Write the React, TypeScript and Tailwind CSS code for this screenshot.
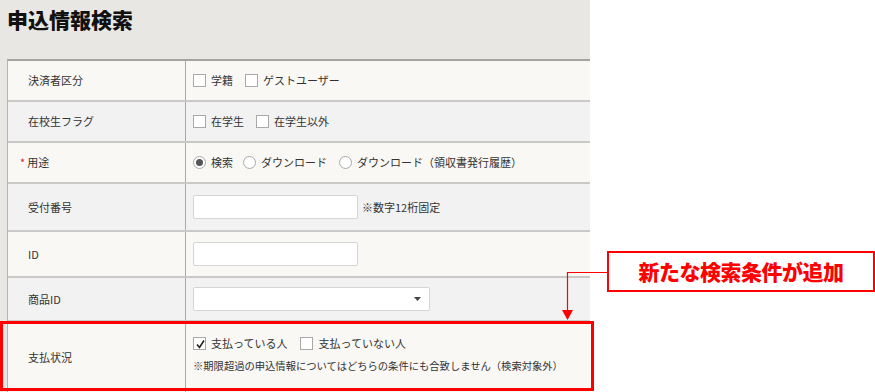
import React from "react";

const jp = { fontFamily: '"Noto Sans CJK JP", "Noto Sans", sans-serif' };

const Box = ({ checked }: { checked?: boolean }) => (
    <span className="relative inline-block w-[13px] h-[13px] border border-[#a9a9a9] bg-white shrink-0">
        {checked && (
            <svg viewBox="0 0 13 13" className="absolute inset-0 w-[13px] h-[13px]">
                <path d="M3 6.5 L5.5 9.5 L10 2.5" fill="none" stroke="#222" strokeWidth="1.6" />
            </svg>
        )}
    </span>
);

const Radio = ({ checked }: { checked?: boolean }) => (
    <span className="inline-flex items-center justify-center w-[13px] h-[13px] rounded-full border border-[#a9a9a9] bg-white shrink-0">
        {checked && <span className="w-[7px] h-[7px] rounded-full bg-[#555]" />}
    </span>
);

const Row = ({ label, alt, h, req, children }: { label: string; alt?: boolean; h: string; req?: boolean; children: React.ReactNode }) => (
    <div className={`flex border-b-2 border-[#c9c9c7] ${alt ? "bg-[#f2f2f2]" : "bg-[#f9f8f5]"} ${h}`}>
        <div className="w-[178px] shrink-0 flex items-center pl-[20px] border-r border-[#a9a9a9]">
            {req && <span className="text-[#e0202a] mr-[2px] -ml-[8px]">*</span>}
            {label}
        </div>
        <div className="flex-1 flex items-center pl-[7px]">{children}</div>
    </div>
);

export default function App() {
    return (
        <div className="relative w-[875px] h-[392px] bg-white overflow-hidden text-[11px] text-[#333]" style={jp}>
            <div className="w-[590px] h-full bg-[#e8e7e3] pl-[7px]">
                <h1 className="h-[59px] pt-[4px] text-[21px] font-black text-[#111] leading-[30px]">申込情報検索</h1>
                <div className="border-t-2 border-[#a3a3a1] border-l border-l-[#b5b5b5]">
                    <Row label="決済者区分" h="h-[41px]">
                        <Box /><span className="ml-[5px] mr-[12px]">学籍</span>
                        <Box /><span className="ml-[5px]">ゲストユーザー</span>
                    </Row>
                    <Row label="在校生フラグ" alt h="h-[41px]">
                        <Box /><span className="ml-[5px] mr-[12px]">在学生</span>
                        <Box /><span className="ml-[5px]">在学生以外</span>
                    </Row>
                    <Row label="用途" req h="h-[41px]">
                        <Radio checked /><span className="ml-[5px] mr-[10px]">検索</span>
                        <Radio /><span className="ml-[5px] mr-[12px]">ダウンロード</span>
                        <Radio /><span className="ml-[5px]">ダウンロード（領収書発行履歴）</span>
                    </Row>
                    <Row label="受付番号" alt h="h-[48px]">
                        <span className="w-[165px] h-[24px] border border-[#d5d5d5] bg-white rounded-[2px]" />
                        <span className="ml-[4px]">※数字12桁固定</span>
                    </Row>
                    <Row label="ID" h="h-[46px]">
                        <span className="w-[165px] h-[24px] border border-[#d5d5d5] bg-white rounded-[2px]" />
                    </Row>
                    <Row label="商品ID" alt h="h-[44px]">
                        <span className="w-[237px] h-[24px] border border-[#d5d5d5] bg-white rounded-[2px] flex items-center justify-end pr-[8px]">
                            <svg viewBox="0 0 7 4" className="w-[7px] h-[4px]"><path d="M0 0 H7 L3.5 4 Z" fill="#444" /></svg>
                        </span>
                    </Row>
                    <div className="flex bg-[#f9f8f5] h-[70px]">
                        <div className="w-[178px] shrink-0 flex items-center pl-[20px] border-r border-[#a9a9a9]">支払状況</div>
                        <div className="flex-1 flex flex-col justify-center pl-[7px] gap-[6px] pb-[6px]">
                            <div className="flex items-center">
                                <Box checked /><span className="ml-[5px] mr-[13px]">支払っている人</span>
                                <Box /><span className="ml-[5px]">支払っていない人</span>
                            </div>
                            <div className="text-[10.3px]">※期限超過の申込情報についてはどちらの条件にも合致しません（検索対象外）</div>
                        </div>
                    </div>
                </div>
            </div>

            <div className="absolute left-0 top-[321px] w-[594px] h-[70px] border-[3px] border-[#ff0000]" />

            <div className="absolute left-[607px] top-[251px] w-[268px] h-[41px] border-[2px] border-[#ff0000] bg-white flex items-center justify-center">
                <span className="text-[21px] font-black text-[#ff0000] tracking-[-0.5px]">新たな検索条件が追加</span>
            </div>
            <svg className="absolute left-[560px] top-[270px]" width="48" height="52" viewBox="0 0 48 52">
                <path d="M47 2.5 H7.5 V42" fill="none" stroke="#ff0000" strokeWidth="1.2" />
                <path d="M2 40 H13 L7.5 50 Z" fill="#ff0000" />
            </svg>
        </div>
    );
}
